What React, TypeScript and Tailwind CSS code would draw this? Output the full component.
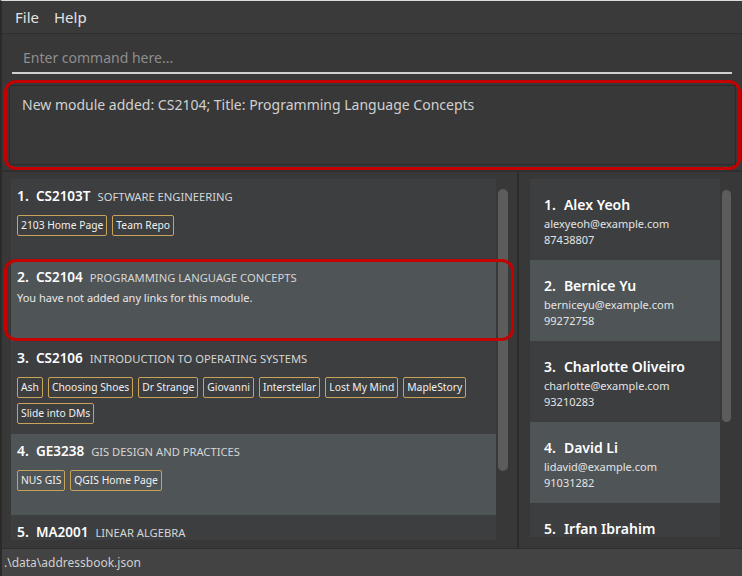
import React from "react";

const modules = [
  { code: "CS2103T", title: "Software Engineering", links: ["2103 Home Page", "Team Repo"] },
  { code: "CS2104", title: "Programming Language Concepts", links: [] },
  {
    code: "CS2106",
    title: "Introduction to Operating Systems",
    links: ["Ash", "Choosing Shoes", "Dr Strange", "Giovanni", "Interstellar", "Lost My Mind", "MapleStory", "Slide into DMs"],
  },
  { code: "GE3238", title: "GIS Design and Practices", links: ["NUS GIS", "QGIS Home Page"] },
  { code: "MA2001", title: "Linear Algebra", links: [] },
];

const persons = [
  { name: "Alex Yeoh", email: "alexyeoh@example.com", phone: "87438807" },
  { name: "Bernice Yu", email: "berniceyu@example.com", phone: "99272758" },
  { name: "Charlotte Oliveiro", email: "charlotte@example.com", phone: "93210283" },
  { name: "David Li", email: "lidavid@example.com", phone: "91031282" },
  { name: "Irfan Ibrahim", email: "", phone: "" },
];

const font = { fontFamily: '"Noto Sans", "Open Sans", sans-serif' };

function ModuleCard({ idx, mod }: { idx: number; mod: (typeof modules)[number] }) {
  const light = idx % 2 === 1;
  return (
    <div className={`min-h-[81px] shrink-0 px-[6px] pt-[7px] pb-[10px] ${light ? "bg-[#4f5457]" : "bg-[#3c3e3f]"}`}>
      <div className="flex items-baseline gap-[7px] leading-[20px]">
        <span className="text-[14px] font-semibold text-white">{idx + 1}.</span>
        <span className="text-[13.5px] font-semibold text-white">{mod.code}</span>
        <span className="text-[11.2px] uppercase text-[#d6d6d6]">{mod.title}</span>
      </div>
      {mod.links.length > 0 ? (
        <div className="mt-[8px] flex flex-wrap gap-x-[5px] gap-y-[5px]">
          {mod.links.map((l) => (
            <span
              key={l}
              className="rounded-[2px] border border-[#c9a35a] px-[3px] text-[10.3px] leading-[19px] text-[#f0f0f0]"
            >
              {l}
            </span>
          ))}
        </div>
      ) : idx === 1 ? (
        <div className="mt-[2px] text-[11px] text-[#e8e8e8]">You have not added any links for this module.</div>
      ) : null}
    </div>
  );
}

function PersonCard({ idx, p }: { idx: number; p: (typeof persons)[number] }) {
  const light = idx % 2 === 1;
  return (
    <div className={`h-[81px] shrink-0 px-[14px] pt-[15px] ${light ? "bg-[#4f5457]" : "bg-[#3c3e3f]"}`}>
      <div className="flex gap-[8px] text-[14px] font-semibold leading-[22px] text-white">
        <span>{idx + 1}.</span>
        <span>{p.name}</span>
      </div>
      {p.email && <div className="text-[11px] leading-[16px] text-[#e4e4e4]">{p.email}</div>}
      {p.phone && <div className="text-[11px] leading-[16px] text-[#e4e4e4]">{p.phone}</div>}
    </div>
  );
}

export default function App() {
  return (
    <div className="flex h-[576px] w-[742px] flex-col overflow-hidden border-t border-l-2 border-t-[#dcdcdc] border-l-[#2a2a2a] bg-[#383838]" style={font}>
      {/* Menu */}
      <div className="flex h-[33px] shrink-0 items-center gap-[15px] border-b border-[#2e2e2e] bg-[#3a3a3a] pl-[13px] text-[15px] text-[#e2e2e2]">
        <span>File</span>
        <span>Help</span>
      </div>

      {/* Command box */}
      <div className="h-[45px] shrink-0 px-[10px] pt-[9px]">
        <div className="flex h-[31px] items-center border-b-2 border-[#cfcfcf] pl-[11px] text-[14px] text-[#8e8e8e]">
          Enter command here...
        </div>
      </div>

      {/* Result */}
      <div className="h-[91px] shrink-0 pl-[2px] pr-[1px] pt-[1px]">
        <div className="h-[90px] rounded-[12px] border-[3px] border-[#c40000] p-[2px]">
          <div className="h-full border border-[#2c2c2c] bg-[#383838] px-[12px] pt-[8px] text-[14px] text-[#d0d0d0]">
            New module added: CS2104; Title: Programming Language Concepts
          </div>
        </div>
      </div>

      {/* Main */}
      <div className="relative flex min-h-0 flex-1 border-t-2 border-[#2f2f2f]">
        <div className="flex w-[517px] shrink-0 border-r-2 border-[#2b2b2b] pl-[9px] pt-[7px]">
          <div className="flex h-[361px] w-[485px] flex-col overflow-hidden">
            {modules.map((m, i) => (
              <ModuleCard key={m.code} idx={i} mod={m} />
            ))}
          </div>
          <div className="ml-[2px] mt-[10px] h-[282px] w-[10px] rounded-[5px] bg-[#5c5c5c]" />
        </div>
        <div className="flex flex-1 pl-[11px] pt-[7px]">
          <div className="flex h-[358px] w-[190px] flex-col overflow-hidden">
            {persons.map((p, i) => (
              <PersonCard key={p.name} idx={i} p={p} />
            ))}
          </div>
          <div className="ml-[2px] mt-[11px] h-[232px] w-[9px] rounded-[5px] bg-[#5c5c5c]" />
        </div>
        {/* highlight around module 2 */}
        <div className="pointer-events-none absolute left-[2px] top-[87px] h-[82px] w-[510px] rounded-[12px] border-[3px] border-[#c40000]" />
      </div>

      {/* Status bar */}
      <div className="flex h-[28px] shrink-0 items-center border-t border-[#2e2e2e] bg-[#434343] pl-[2px] text-[12px] text-[#cfcfcf]">
        .\data\addressbook.json
      </div>
    </div>
  );
}
